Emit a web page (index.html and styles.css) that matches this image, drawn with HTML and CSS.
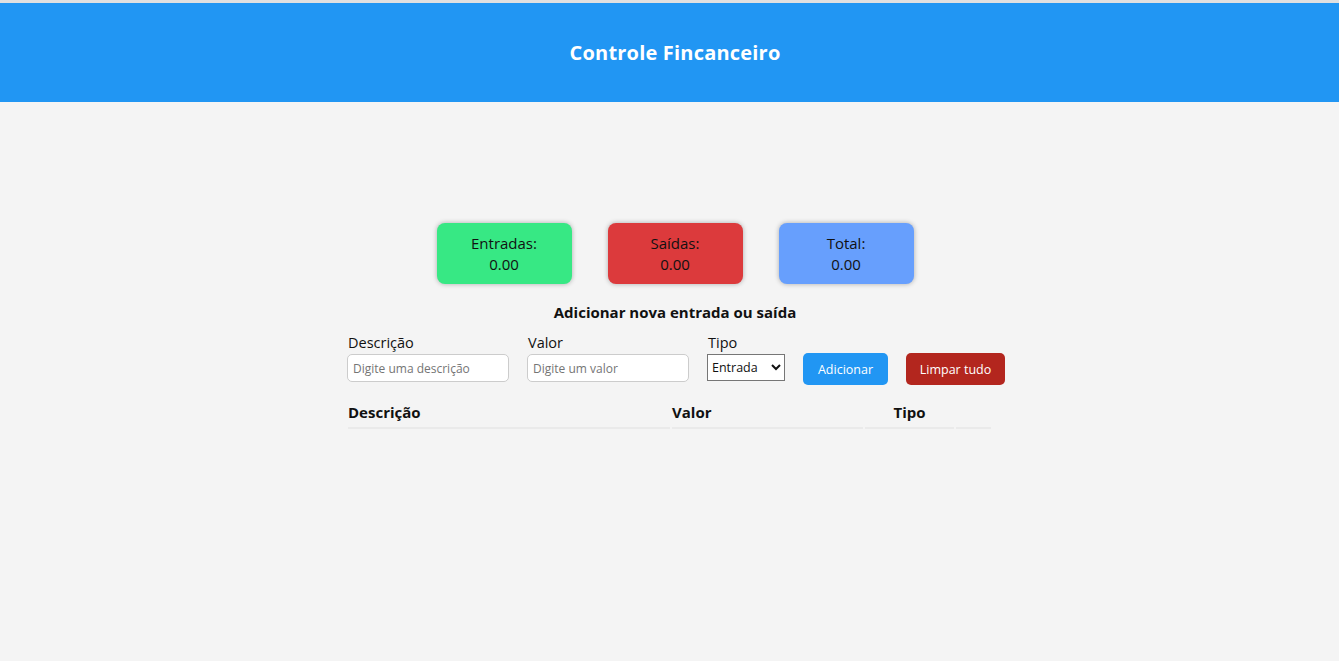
FILE: index.html
```html
<!DOCTYPE html>
<html lang="pt-BR">
<head>
<meta charset="utf-8">
<title>Controle Financeiro</title>
<link rel="stylesheet" href="styles.css">
</head>
<body>
<div class="app">
  <div class="topline"></div>
  <header class="header">
    <h1 class="title">Controle Fincanceiro</h1>
  </header>
  <main class="main">
    <section class="cards">
      <div class="card card-in">
        <span class="card-label">Entradas:</span>
        <span class="card-value">0.00</span>
      </div>
      <div class="card card-out">
        <span class="card-label">Saídas:</span>
        <span class="card-value">0.00</span>
      </div>
      <div class="card card-total">
        <span class="card-label">Total:</span>
        <span class="card-value">0.00</span>
      </div>
    </section>
    <h2 class="subtitle">Adicionar nova entrada ou saída</h2>
    <section class="form-area">
      <form class="form">
        <div class="field">
          <label class="label">Descrição</label>
          <input class="input" type="text" placeholder="Digite uma descrição">
        </div>
        <div class="field">
          <label class="label">Valor</label>
          <input class="input" type="text" placeholder="Digite um valor">
        </div>
        <div class="field">
          <label class="label">Tipo</label>
          <select class="select"><option>Entrada</option><option>Saída</option></select>
        </div>
        <button type="button" class="btn btn-add">Adicionar</button>
        <button type="button" class="btn btn-clear">Limpar tudo</button>
      </form>
      <table class="table">
        <thead>
          <tr>
            <th class="th th-desc">Descrição</th>
            <th class="th th-val">Valor</th>
            <th class="th th-tipo">Tipo</th>
            <th class="th th-act"></th>
          </tr>
        </thead>
      </table>
    </section>
  </main>
</div>
</body>
</html>
```
FILE: styles.css
```css
html, body {
  margin: 0;
  padding: 0;
  overflow: hidden;
}
body {
  background: #f4f4f4;
  font-family: "Open Sans", "Noto Sans", sans-serif;
  color: #111;
}
.app {
  width: 1350px;
  min-height: 661px;
  background: #f4f4f4;
}
.topline {
  height: 3px;
  background: #e0e0e0;
}
.header {
  height: 99px;
  background: #2196f3;
  display: flex;
  align-items: center;
  justify-content: center;
}
.title {
  margin: 0;
  color: #fff;
  font-size: 20px;
  font-weight: 700;
  letter-spacing: 0.2px;
}
.main {
  display: flex;
  flex-direction: column;
  align-items: center;
  padding-top: 121px;
}
.cards {
  display: flex;
  gap: 36px;
}
.card {
  width: 135px;
  height: 61px;
  border-radius: 8px;
  box-shadow: 0 0 5px rgba(0,0,0,0.3);
  display: flex;
  flex-direction: column;
  align-items: center;
  justify-content: center;
  font-size: 15px;
  line-height: 21px;
  color: #111;
}
.card-in { background: #37e884; }
.card-out { background: #dc3a3c; }
.card-total { background: #679ffd; }
.subtitle {
  margin: 18px 0 0;
  font-size: 15px;
  font-weight: 700;
  line-height: 20px;
}
.form-area {
  width: 658px;
  margin-top: 12px;
  margin-left: 2px;
}
.form {
  display: flex;
  align-items: flex-end;
  gap: 18px;
}
.field {
  display: flex;
  flex-direction: column;
}
.label {
  font-size: 14.5px;
  line-height: 18px;
  padding-left: 1px;
  margin-bottom: 2px;
}
.input {
  box-sizing: border-box;
  width: 162px;
  height: 28px;
  border: 1px solid #ccc;
  border-radius: 5px;
  padding: 0 5px;
  font-family: inherit;
  font-size: 12px;
  background: #fff;
  outline: none;
}
.input::placeholder { color: #757575; }
.select {
  box-sizing: border-box;
  width: 78px;
  height: 27px;
  border: 1px solid #767676;
  border-radius: 0;
  background: #fff;
  font-family: inherit;
  font-size: 12.5px;
  color: #111;
  margin-bottom: 1px;
}
.btn {
  height: 32px;
  border: none;
  border-radius: 5px;
  color: #fff;
  font-family: inherit;
  font-size: 12.5px;
  padding: 0;
  margin-bottom: -3px;
  cursor: pointer;
}
.btn-add { background: #2196f3; width: 85px; }
.btn-clear { background: #b3261e; width: 99px; }
.table {
  width: 647px;
  margin-top: 20px;
  margin-left: -1px;
  border-spacing: 2px 0;
}
.th {
  font-size: 15px;
  font-weight: 700;
  text-align: left;
  border-bottom: 2px solid #eaeaea;
  padding: 0 0 5px;
  line-height: 20px;
}
.th-desc { width: 320px; }
.th-val { width: 190px; }
.th-tipo { width: 88px; text-align: center; }
.th-act { width: 35px; }
```
